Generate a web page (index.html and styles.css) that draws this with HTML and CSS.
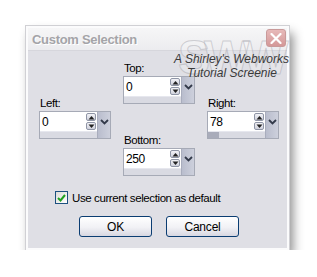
FILE: index.html
```html
<!DOCTYPE html>
<html lang="en">
<head>
    <meta charset="UTF-8">
    <title>Custom Selection</title>
    <link rel="stylesheet" href="styles.css">
</head>
<body>
    <div class="dialog">
        <div class="titlebar">
            <span class="title">Custom Selection</span>
            <span class="close">
                <svg width="12" height="11" viewBox="0 0 12 11"><path d="M1.5 1 L10.5 10 M10.5 1 L1.5 10" stroke="#fff" stroke-width="2.2" stroke-linecap="round"/></svg>
            </span>
        </div>

        <div class="body">
            <div class="stamp">
                <span class="stamp-mark">SWW</span>
                <span class="stamp-line">A Shirley's Webworks</span>
                <span class="stamp-line stamp-line2">Tutorial Screenie</span>
            </div>

            <div class="fields">
                <div class="col col-side">
                    <div class="field">
                        <div class="field-label">Left:</div>
                        <div class="spin">
                            <div class="spin-main">
                                <div class="spin-top">
                                    <span class="value">0</span>
                                    <span class="arrows">
                                        <span class="arrow"><svg width="7" height="5" viewBox="0 0 7 5"><path d="M0.5 4.5 L3.5 1 L6.5 4.5 Z" fill="#222"/></svg></span>
                                        <span class="arrow"><svg width="7" height="5" viewBox="0 0 7 5"><path d="M0.5 0.5 L3.5 4 L6.5 0.5 Z" fill="#222"/></svg></span>
                                    </span>
                                </div>
                                <div class="slider"><span class="thumb" style="width: 0px"></span></div>
                            </div>
                            <span class="drop"><svg width="9" height="6" viewBox="0 0 9 6"><path d="M1 1 L4.5 4.5 L8 1" stroke="#333a4a" stroke-width="1.8" fill="none"/></svg></span>
                        </div>
                    </div>
                </div>

                <div class="col col-mid">
                    <div class="field">
                        <div class="field-label">Top:</div>
                        <div class="spin">
                            <div class="spin-main">
                                <div class="spin-top">
                                    <span class="value">0</span>
                                    <span class="arrows">
                                        <span class="arrow"><svg width="7" height="5" viewBox="0 0 7 5"><path d="M0.5 4.5 L3.5 1 L6.5 4.5 Z" fill="#222"/></svg></span>
                                        <span class="arrow"><svg width="7" height="5" viewBox="0 0 7 5"><path d="M0.5 0.5 L3.5 4 L6.5 0.5 Z" fill="#222"/></svg></span>
                                    </span>
                                </div>
                                <div class="slider"><span class="thumb" style="width: 0px"></span></div>
                            </div>
                            <span class="drop"><svg width="9" height="6" viewBox="0 0 9 6"><path d="M1 1 L4.5 4.5 L8 1" stroke="#333a4a" stroke-width="1.8" fill="none"/></svg></span>
                        </div>
                    </div>

                    <div class="field field-bottom">
                        <div class="field-label">Bottom:</div>
                        <div class="spin">
                            <div class="spin-main">
                                <div class="spin-top">
                                    <span class="value">250</span>
                                    <span class="arrows">
                                        <span class="arrow"><svg width="7" height="5" viewBox="0 0 7 5"><path d="M0.5 4.5 L3.5 1 L6.5 4.5 Z" fill="#222"/></svg></span>
                                        <span class="arrow"><svg width="7" height="5" viewBox="0 0 7 5"><path d="M0.5 0.5 L3.5 4 L6.5 0.5 Z" fill="#222"/></svg></span>
                                    </span>
                                </div>
                                <div class="slider"><span class="thumb" style="width: 0px"></span></div>
                            </div>
                            <span class="drop"><svg width="9" height="6" viewBox="0 0 9 6"><path d="M1 1 L4.5 4.5 L8 1" stroke="#333a4a" stroke-width="1.8" fill="none"/></svg></span>
                        </div>
                    </div>
                </div>

                <div class="col col-side">
                    <div class="field">
                        <div class="field-label">Right:</div>
                        <div class="spin">
                            <div class="spin-main">
                                <div class="spin-top">
                                    <span class="value">78</span>
                                    <span class="arrows">
                                        <span class="arrow"><svg width="7" height="5" viewBox="0 0 7 5"><path d="M0.5 4.5 L3.5 1 L6.5 4.5 Z" fill="#222"/></svg></span>
                                        <span class="arrow"><svg width="7" height="5" viewBox="0 0 7 5"><path d="M0.5 0.5 L3.5 4 L6.5 0.5 Z" fill="#222"/></svg></span>
                                    </span>
                                </div>
                                <div class="slider"><span class="thumb" style="width: 11px"></span></div>
                            </div>
                            <span class="drop"><svg width="9" height="6" viewBox="0 0 9 6"><path d="M1 1 L4.5 4.5 L8 1" stroke="#333a4a" stroke-width="1.8" fill="none"/></svg></span>
                        </div>
                    </div>
                </div>
            </div>

            <label class="check">
                <span class="check-box"><svg width="9" height="8" viewBox="0 0 9 8"><path d="M1 4 L3.5 6.5 L8 1" stroke="#21a121" stroke-width="2" fill="none"/></svg></span>
                <span class="check-text">Use current selection as default</span>
            </label>

            <div class="buttons">
                <button class="btn" type="button">OK</button>
                <button class="btn" type="button">Cancel</button>
            </div>
        </div>
    </div>
</body>
</html>
```

FILE: styles.css
```css
* {
    margin: 0;
    padding: 0;
    box-sizing: border-box;
}

body {
    background: #fff;
    font-family: 'Liberation Sans', Arial, sans-serif;
    font-size: 11.5px;
    letter-spacing: -0.4px;
    color: #000;
}

.dialog {
    margin: 26px 0 0 26px;
    width: 263px;
    height: 224px;
    border: 2px solid #fbfbfc;
    outline: 1px solid #d0d0d4;
    background: #dfdfe5;
    box-shadow: 4px 7px 10px rgba(0, 0, 0, 0.45);
    display: flex;
    flex-direction: column;
}

.titlebar {
    height: 23px;
    background: linear-gradient(#f6f6f7, #ececef);
    border-bottom: 1px solid #d6d6dc;
    display: flex;
    align-items: center;
    justify-content: space-between;
    padding: 0 1px 0 4px;
}

.title {
    font-weight: bold;
    font-size: 13px;
    letter-spacing: -0.3px;
    color: #a4a4a8;
    text-shadow: 1px 1px 0 #fff;
}

.close {
    width: 20px;
    height: 18px;
    margin-top: -2px;
    border: 1px solid #c99a9a;
    border-radius: 3px;
    background: linear-gradient(#e7b9b9, #d49898);
    display: flex;
    align-items: center;
    justify-content: center;
    position: relative;
    z-index: 2;
}

.body {
    position: relative;
    flex: 1;
    padding: 10px 0 0 11px;
}

/* watermark over the top right corner */
.stamp {
    position: absolute;
    top: 0;
    left: 146px;
    width: 114px;
    height: 30px;
}

.stamp-mark {
    position: absolute;
    top: -17px;
    left: 4px;
    font-size: 48px;
    font-weight: bold;
    letter-spacing: -6px;
    line-height: 48px;
    color: rgba(255, 255, 255, 0.2);
    -webkit-text-stroke: 1px rgba(160, 160, 168, 0.45);
}

.stamp-line {
    position: relative;
    display: block;
    font-style: italic;
    font-size: 12px;
    letter-spacing: 0;
    line-height: 14px;
    color: #3a3a3a;
    white-space: nowrap;
    padding-top: 1px;
}

.stamp-line2 {
    padding: 0 0 0 13px;
}

.fields {
    display: flex;
    gap: 12px;
}

.col {
    width: 72px;
    display: flex;
    flex-direction: column;
}

.col-side {
    padding-top: 35px;
}

.field-bottom {
    margin-top: 29px;
}

.field-label {
    height: 14px;
    line-height: 14px;
    margin-bottom: 1px;
    padding-left: 1px;
}

.spin {
    height: 28px;
    border: 1px solid #a6aab6;
    background: #fff;
    display: flex;
}

.spin-main {
    flex: 1;
    display: flex;
    flex-direction: column;
}

.spin-top {
    flex: 1;
    display: flex;
    justify-content: space-between;
}

.value {
    padding: 3px 0 0 2px;
    font-size: 12px;
    line-height: 14px;
}

.arrows {
    width: 11px;
    padding: 1px 1px 0 0;
    display: flex;
    flex-direction: column;
    gap: 1px;
}

.arrow {
    height: 8px;
    border: 1px solid #8f95a6;
    border-radius: 2px;
    background: linear-gradient(#f2f2f6, #cfd1dc);
    display: flex;
    align-items: center;
    justify-content: center;
}

.slider {
    height: 7px;
    background: #d9dae2;
    border-top: 1px solid #e6e7ee;
    display: flex;
}

.thumb {
    background: #a9acba;
}

.drop {
    width: 13px;
    background: linear-gradient(90deg, #b9bdcd, #cdd0dc);
    border-left: 1px solid #a9adbd;
    display: flex;
    justify-content: center;
    padding-top: 7px;
}

.check {
    margin: 15px 0 0 16px;
    display: flex;
    align-items: center;
    gap: 4px;
    height: 13px;
}

.check-box {
    width: 13px;
    height: 13px;
    border: 1px solid #1c5180;
    background: linear-gradient(135deg, #dcdcd7, #fff);
    display: flex;
    align-items: center;
    justify-content: center;
}

.check-text {
    line-height: 14px;
}

.buttons {
    margin: 12px 0 0 40px;
    display: flex;
    gap: 14px;
}

.btn {
    width: 73px;
    height: 21px;
    border: 1px solid #0b3d72;
    border-radius: 3px;
    background: linear-gradient(#ffffff, #f1f1f5 55%, #d7d7e1);
    font-family: 'Liberation Sans', Arial, sans-serif;
    font-size: 12px;
    letter-spacing: -0.2px;
    color: #000;
}
```
